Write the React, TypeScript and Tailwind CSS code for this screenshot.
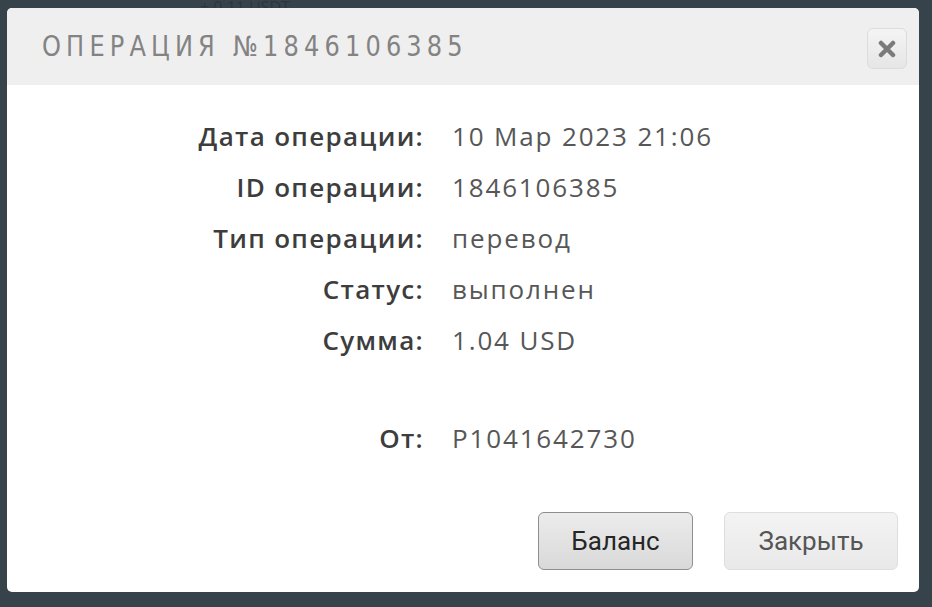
import React from 'react';

const rows: [string, string][] = [
  ['Дата операции:', '10 Мар 2023 21:06'],
  ['ID операции:', '1846106385'],
  ['Тип операции:', 'перевод'],
  ['Статус:', 'выполнен'],
  ['Сумма:', '1.04 USD'],
];

function Row({ label, value }: { label: string; value: string }) {
  return (
    <div className="flex items-center h-[51px]">
      <div className="w-[417px] text-right font-semibold tracking-[1.3px] text-[#3d3d3d]">{label}</div>
      <div className="ml-[28px] tracking-[1.85px] text-[#575757]">{value}</div>
    </div>
  );
}

export default function App() {
  return (
    <div className="w-[932px] h-[607px] bg-[#37434b] overflow-hidden relative">
      <div className="absolute left-[200px] top-0 leading-[14px] text-[#2c363d] text-[16px] font-['Open_Sans',sans-serif]">+ 0.11 USDT</div>
      <div className="absolute left-[7px] top-[8px] w-[912px] h-[584px] bg-white rounded-[5px] overflow-hidden flex flex-col">
        <div className="h-[77px] bg-[#efefef] flex items-center justify-between pl-[35px] pr-[12px]">
          <div className="text-[28px] tracking-[6px] text-[#838383] font-['DejaVu_Sans',sans-serif] scale-x-[0.86] origin-left whitespace-nowrap">
            ОПЕРАЦИЯ №1846106385
          </div>
          <button className="w-[40px] h-[41px] rounded-[6px] border border-[#dcdcdc] bg-gradient-to-b from-[#f4f4f4] to-[#e6e6e6] flex items-center justify-center mb-[-4px]">
            <svg width="18" height="18" viewBox="0 0 18 18">
              <path d="M3 3 L15 15 M15 3 L3 15" stroke="#7a7a7a" strokeWidth="4.5" strokeLinecap="round" />
            </svg>
          </button>
        </div>
        <div className="flex-1 flex flex-col pt-[26px] text-[26px] font-['Open_Sans',sans-serif]">
          {rows.map(([l, v]) => (
            <Row key={l} label={l} value={v} />
          ))}
          <div className="h-[47px]" />
          <Row label="От:" value="P1041642730" />
          <div className="flex-1" />
          <div className="flex justify-end gap-[31px] pr-[21px] pb-[22px] font-['Roboto',sans-serif]">
            <button className="w-[155px] h-[58px] rounded-[6px] border border-[#8e8e8e] bg-gradient-to-b from-[#ececec] to-[#d9d9d9] text-[#262626] text-[26px]">
              Баланс
            </button>
            <button className="w-[174px] h-[58px] rounded-[6px] border border-[#dedede] bg-gradient-to-b from-[#f3f3f3] to-[#e9e9e9] text-[#555] text-[26px]">
              Закрыть
            </button>
          </div>
        </div>
      </div>
    </div>
  );
}
